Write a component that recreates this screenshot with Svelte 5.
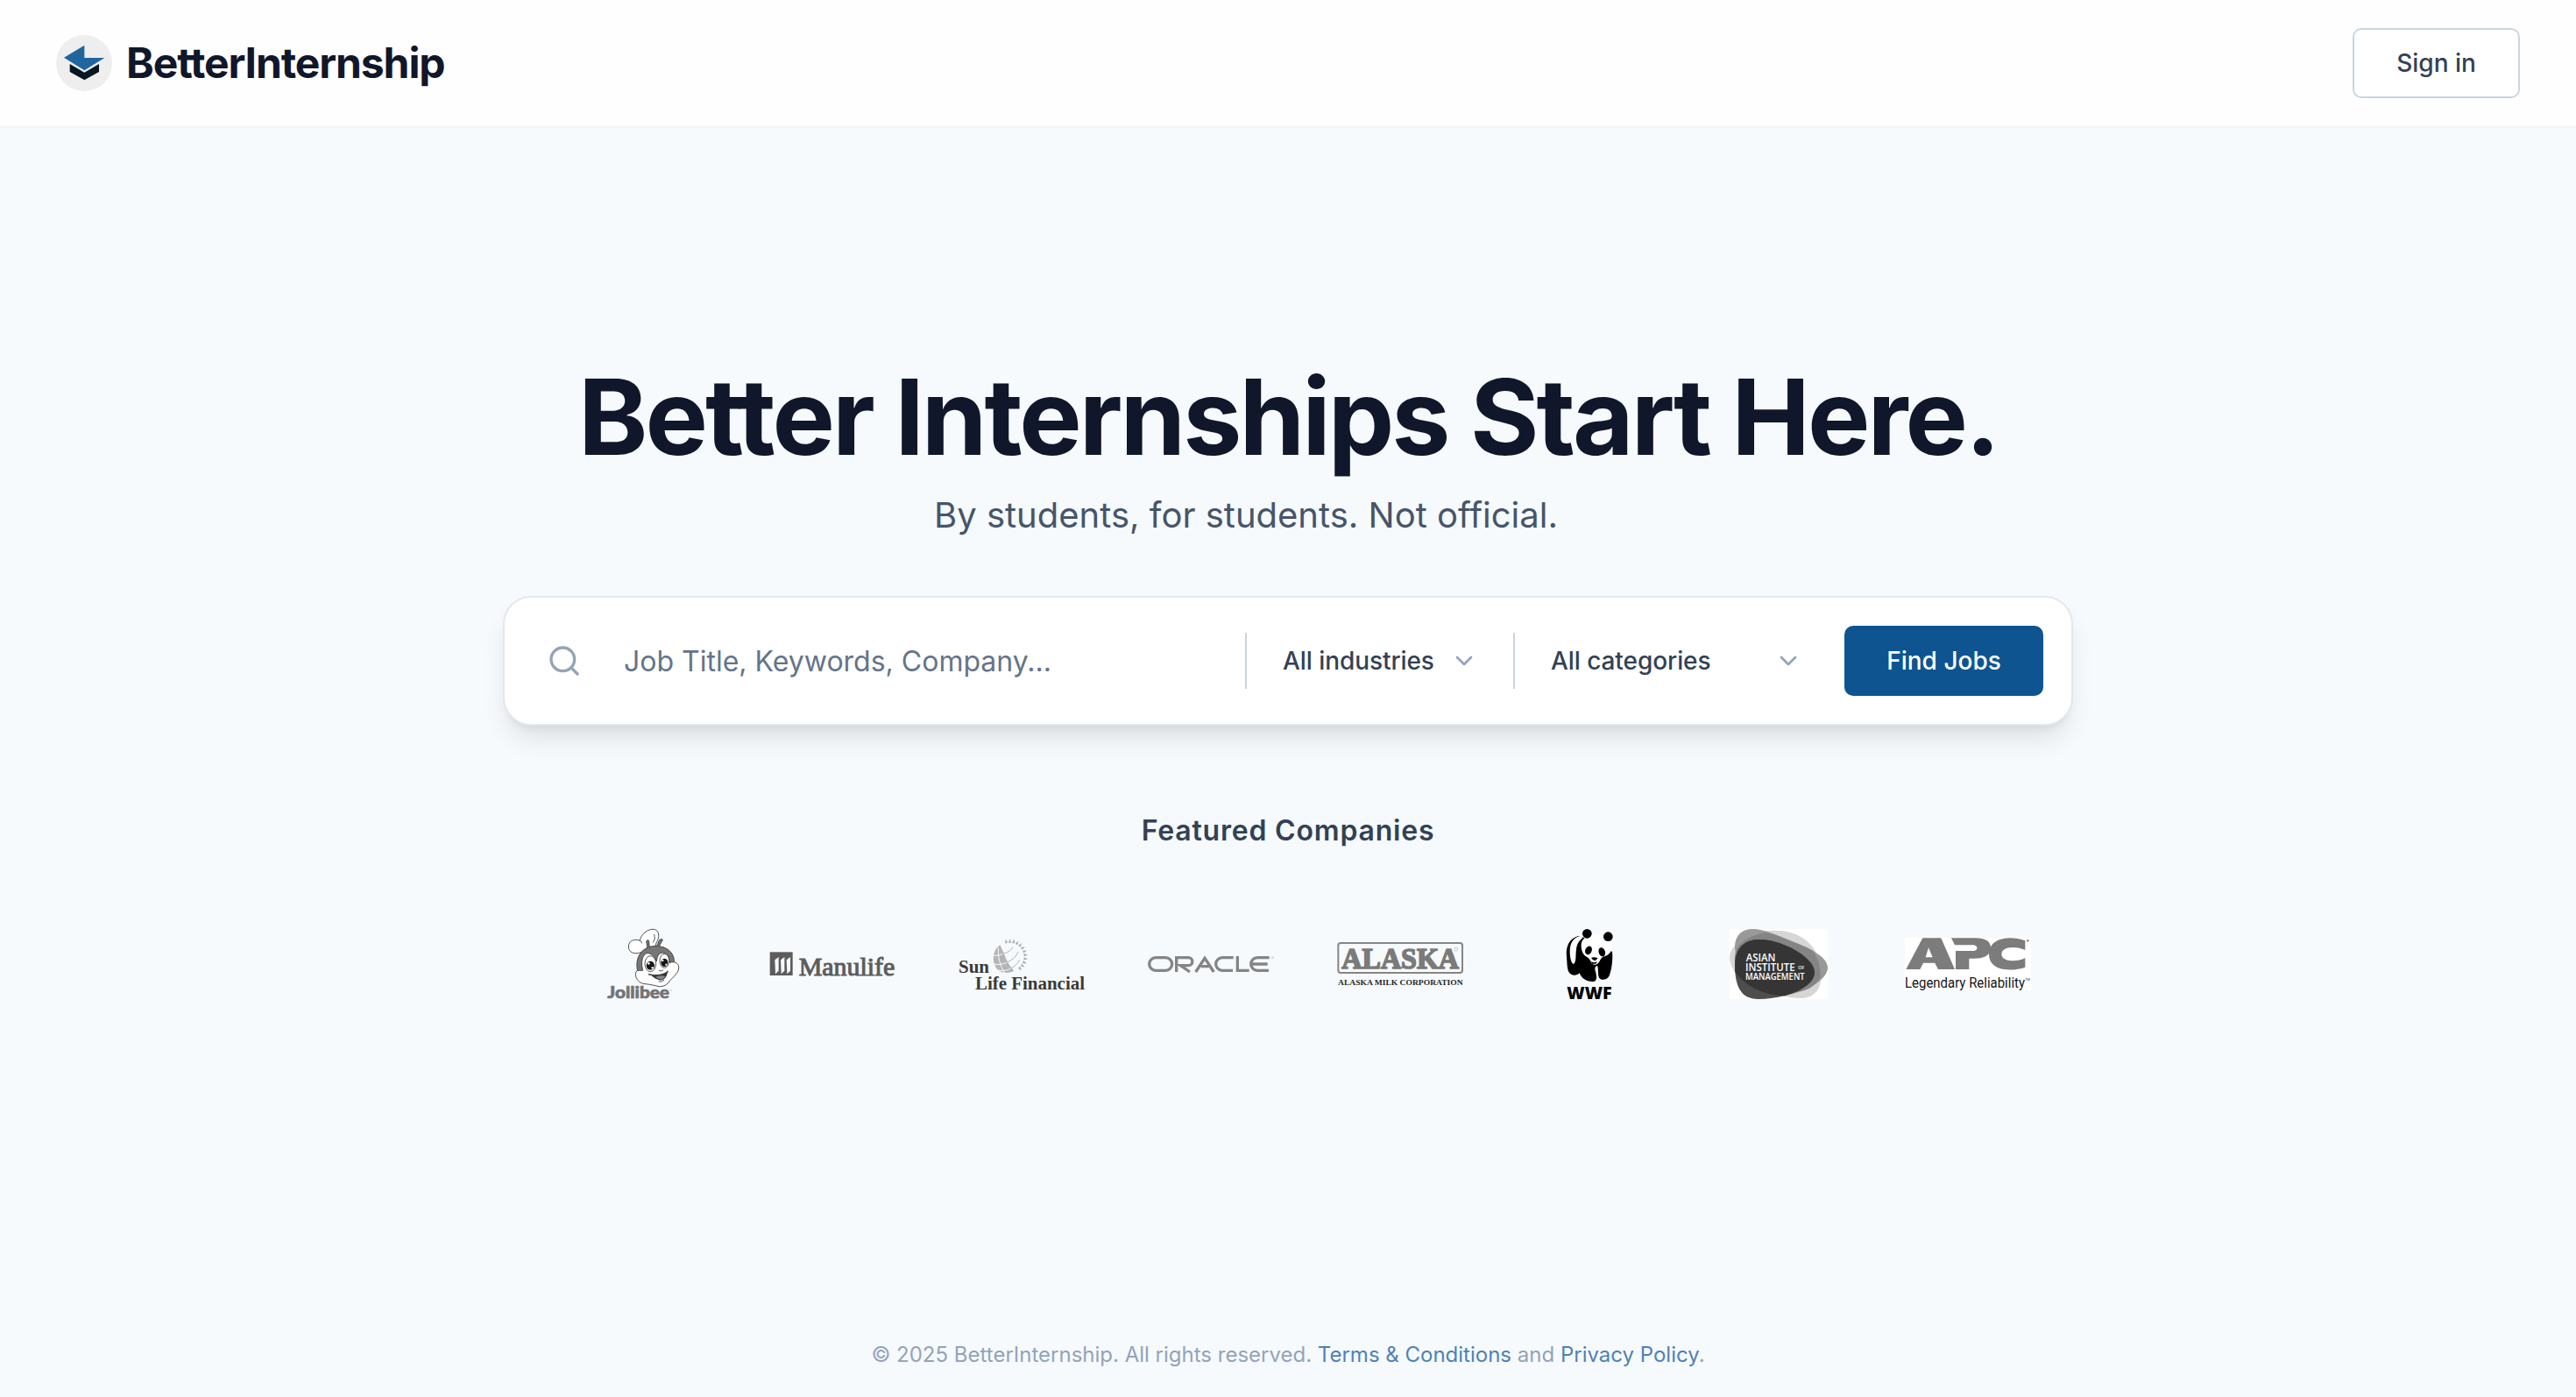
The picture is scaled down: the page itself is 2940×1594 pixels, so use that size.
<script>
  const selects = [
    { label: 'All industries', size: 'narrow' },
    { label: 'All categories', size: 'wide' }
  ];
  // Short rays fanned round the upper right of the sun globe
  const rays = [-14, 0, 14, 28, 42, 56, 70, 84, 98, 112, 126, 140];
</script>

<div class="page">
  <header>
    <a class="brand" href="#home">
      <svg class="mark" viewBox="0 0 192 192" aria-hidden="true">
        <circle cx="96" cy="96" r="96" fill="#eee" />
        <path d="M47 99v27l50 28 50-28V99l-50 29z" fill="#071722" />
        <path d="M97 35v43h69l-69 43-70-44z" fill="#21659f" />
      </svg>
      <span>BetterInternship</span>
    </a>
    <button class="signin">Sign in</button>
  </header>

  <main>
    <h1>Better Internships Start Here.</h1>
    <p class="tagline">By students, for students. Not official.</p>

    <form class="search" onsubmit={(e) => e.preventDefault()}>
      <svg class="glass" viewBox="0 0 24 24" aria-hidden="true"><circle cx="11" cy="11" r="8" /><path d="m21 21-4.3-4.3" /></svg>
      <input type="text" placeholder="Job Title, Keywords, Company..." />
      {#each selects as s}
        <div class="select {s.size}">
          <span>{s.label}</span>
          <svg viewBox="0 0 24 24" aria-hidden="true"><path d="m6 9 6 6 6-6" /></svg>
        </div>
      {/each}
      <button class="find">Find Jobs</button>
    </form>

    <h2>Featured Companies</h2>
    <div class="logos">
      <svg viewBox="-54 60 432 240" role="img" aria-label="Jollibee">
        <g stroke="#333" stroke-width="2.5" stroke-linejoin="round">
          <path d="M148 142C130 146 112 140 112 120C112 101 132 92 151 100C154 78 177 59 199 61C218 64 220 88 207 108L202 126Z" fill="#fff" />
          <path d="M151 100q6 2 7 9M200 78q6 16-4 28" fill="none" />
          <path d="M143 205C134 166 149 121 204 118C250 119 270 147 268 174L262 211L154 224Z" fill="#777" />
          <path d="M177 126L173 102Q177 94 182 101L184 125M208 121L217 99Q225 90 229 97L216 121" fill="#777" />
          <path d="M161 202C151 164 165 140 181 143Q198 146 208 171Q211 139 231 141Q251 144 253 175C272 169 286 179 284 195C281 216 257 229 248 245Q229 263 205 254Q184 249 161 247Q137 239 136 214Q138 200 149 202Z" fill="#fff" />
          <ellipse cx="187" cy="179" rx="19" ry="27" fill="#fff" />
          <ellipse cx="235" cy="169" rx="16" ry="24" fill="#fff" />
          <path d="M183 215Q220 223 245 206Q240 237 218 234Q203 230 190 218Z" fill="#333" />
          <path d="M204 224Q221 216 238 222Q231 235 216 231Z" fill="#888" stroke="none" />
          <path d="M216 202q8 4 15-2M181 212q4 5 0 7M243 203q5 1 5 5M215 240q12 2 19-5" fill="none" />
        </g>
        <ellipse cx="187" cy="185" rx="14" ry="15" fill="#161616" /><ellipse cx="235" cy="175" rx="12" ry="14" fill="#161616" />
        <circle cx="181" cy="178" r="4" fill="#fff" /><circle cx="229" cy="168" r="3.5" fill="#fff" />
        <circle cx="194" cy="193" r="4" fill="#ddd" /><circle cx="241" cy="182" r="3.5" fill="#ddd" />
        <text class="lato" x="40" y="297" font-size="57" textLength="212" lengthAdjust="spacingAndGlyphs" fill="#747474" stroke="#747474" stroke-width="2" stroke-linejoin="round">Jollibee</text>
        <circle cx="258" cy="270" r="2" fill="none" stroke="#999" />
      </svg>

      <svg viewBox="594 60 432 240" role="img" aria-label="Manulife">
        <path d="M596 139h78v80h-78z" fill="#5c5c5c" />
        <path d="M613 166l13-10v47l-11 11zM633 166l13-10v47l-11 11zM653 166l13-10v47l-11 11z" fill="#f6fafd" />
        <text class="serif" x="695" y="218" font-size="86" textLength="329" lengthAdjust="spacingAndGlyphs" fill="#5c5c5c" stroke="#5c5c5c" stroke-width="3">Manulife</text>
      </svg>

      <svg viewBox="102 60 432 240" role="img" aria-label="Sun Life Financial">
        <path d="M244 115C260 146 268 180 292 203C271 214 242 212 230 192C216 168 218 132 244 115Z" fill="#b5b5b5" />
        <g fill="none" stroke="#f6fafd" stroke-width="3"><path d="M222 151Q241 153 254 145M223 180Q245 186 271 173M237 201Q263 207 286 192M238 124Q235 172 260 211" /></g>
        <g fill="none" stroke="#b5b5b5" stroke-width="3"><path d="M253 145Q280 139 288 122M266 175Q297 163 306 138M280 195Q302 185 311 165" /></g>
        <g fill="#a8a8a8">
          {#each rays as angle}
            <path d="M278 93l4 14h-9z" transform="rotate({angle} 278 155)" />
          {/each}
        </g>
        <g class="serif bold" fill="#3a3a3a">
          <text x="102" y="210" font-size="60" textLength="105" lengthAdjust="spacingAndGlyphs">Sun</text>
          <text x="159" y="266" font-size="60" textLength="375" lengthAdjust="spacingAndGlyphs">Life Financial</text>
        </g>
      </svg>

      <svg viewBox="750 60 432 240" role="img" aria-label="Oracle">
        <g fill="none" stroke="#858585" stroke-width="10">
          <path d="M777 158h34a22 22 0 0 1 0 44h-34a22 22 0 0 1 0-44z" />
          <path d="M848 207v-49h41a13 13 0 0 1 0 27h-27l32 22" />
          <path d="M914 207l31-47 31 47M932 188h27" />
          <path d="M1043 158h-38a22 22 0 0 0 0 44h36M1057 153v49h40" />
          <path d="M1166 158h-41a22 22 0 0 0 0 44h39M1107 180h53" />
        </g>
        <circle cx="1177" cy="158" r="3.5" fill="none" stroke="#aaa" stroke-width="1.5" />
      </svg>

      <svg viewBox="78 60 432 240" role="img" aria-label="Alaska Milk Corporation">
        <rect x="82" y="108" width="425" height="102" rx="8" fill="none" stroke="#858585" stroke-width="6" />
        <text class="serif bold" x="94" y="195" font-size="103" textLength="401" lengthAdjust="spacingAndGlyphs" fill="#7a7a7a" stroke="#7a7a7a" stroke-width="5">ALASKA</text>
        <circle cx="485" cy="129" r="6" fill="#f6fafd" stroke="#999" stroke-width="1.5" />
        <text class="serif bold" x="81" y="251" font-size="27" textLength="428" lengthAdjust="spacingAndGlyphs" fill="#262626">ALASKA MILK CORPORATION</text>
      </svg>

      <svg viewBox="726 60 432 240" role="img" aria-label="WWF">
        <path d="M904 84C875 91 860 118 864 155C866 176 865 191 870 205C877 220 897 223 908 211C915 230 935 242 957 240C969 237 967 223 963 205C959 196 962 186 969 186C974 195 969 215 976 228C984 237 1000 235 1009 222C1018 201 1023 165 1020 138L975 105Z" />
        <path d="M912 84C887 88 874 109 875 140C876 164 881 177 888 180C898 172 894 150 897 130C899 112 908 98 919 91Z" fill="#fff" />
        <path d="M914 119C912 98 930 80 959 79C992 77 1017 94 1020 119C1020 137 1009 149 989 155C979 160 980 169 971 178Q961 187 950 178C946 170 943 161 934 156C923 150 915 139 914 119Z" fill="#fff" />
        <circle cx="934" cy="76" r="16" /><circle cx="1006" cy="86" r="16" />
        <ellipse cx="939" cy="133" rx="11" ry="15" transform="rotate(25 939 133)" />
        <ellipse cx="985" cy="139" rx="11" ry="16" transform="rotate(-18 985 139)" />
        <path d="M948 158q12-3 23 2l-9 9q-10-2-14-11zM948 172q11 5 21 0l-5 7h-13z" />
        <text class="sans" x="865" y="299" font-size="58" font-weight="800" textLength="154" lengthAdjust="spacingAndGlyphs">WWF</text>
      </svg>

      <svg viewBox="54 60 432 240" role="img" aria-label="Asian Institute of Management">
        <path d="M102 60h336v240H102z" fill="#fff" />
        <path d="M102 155C110 95 190 64 260 65C350 66 405 120 414 190C424 255 400 297 345 297C270 294 180 270 125 215Q102 186 102 155Z" fill="#d6d6d6" />
        <path d="M120 125C119 82 143 60 182 60C225 60 277 87 330 108C390 131 438 160 438 193C437 230 378 268 315 283C255 299 172 250 135 215Z" fill="#999" />
        <path d="M122 140C132 105 175 82 222 73C260 78 300 96 330 108Q362 120 387 134Q414 170 413 226Q400 248 374 264C308 294 190 273 127 211Q115 175 122 140Z" fill="#848484" />
        <path d="M120 190C118 125 150 98 200 96C265 96 332 128 366 161C398 190 401 218 377 244C352 272 280 299 202 300C139 301 122 254 120 190Z" fill="#4d4d4d" />
        <path d="M121 207C116 127 151 98 200 96C265 96 332 128 366 161C398 190 401 218 377 244Q346 274 292 289C215 286 159 257 121 207Z" fill="#353535" />
        <g class="sans semibold" fill="#fff">
          <text x="158" y="170" font-size="35" textLength="101" lengthAdjust="spacingAndGlyphs">ASIAN</text>
          <text x="156" y="203" font-size="35" textLength="170" lengthAdjust="spacingAndGlyphs">INSTITUTE</text>
          <text x="337" y="198" font-size="17" textLength="21" lengthAdjust="spacingAndGlyphs">OF</text>
          <text x="156" y="235" font-size="34" textLength="203" lengthAdjust="spacingAndGlyphs">MANAGEMENT</text>
        </g>
      </svg>

      <svg viewBox="702 60 432 240" role="img" aria-label="APC Legendary Reliability">
        <path d="M702 90h432v180H702z" fill="#fff" />
        <g fill="#7c7c7c">
          <path d="M706 198L763 91H826L873 198H816L805 176H765L754 198ZM773 157H797L783 124Z" fill-rule="evenodd" />
          <path d="M861 91H943C979 91 998 103 996 128C994 152 969 162 932 161H922V198H876V135H936C953 135 954 116 937 115H873Z" />
          <path d="M1114 100V132C1085 118 1034 118 1033 146C1034 174 1086 174 1114 159V191C1067 207 990 205 990 146C990 87 1066 82 1114 100Z" />
        </g>
        <circle cx="1123" cy="100" r="4" fill="#8a8a8a" />
        <text class="narrow-sans" x="702" y="260" font-size="49" textLength="411" lengthAdjust="spacingAndGlyphs" fill="#151515">Legendary Reliability</text>
        <text class="narrow-sans" x="1114" y="236" font-size="13" textLength="17" lengthAdjust="spacingAndGlyphs" fill="#333">TM</text>
      </svg>
    </div>
  </main>

  <footer>© 2025 BetterInternship. All rights reserved. <a href="#terms">Terms &amp; Conditions</a> and <a href="#privacy">Privacy Policy</a>.</footer>
</div>

<style>
  :global(body) { margin: 0; }
  .page {
    box-sizing: border-box;
    display: flex;
    flex-direction: column;
    width: 100%;
    height: 1594px;
    background: #f6fafd;
    color: #334155;
    font-family: Inter, "Liberation Sans", sans-serif;
    font-size: 28px;
    overflow: hidden;
  }
  header {
    box-sizing: border-box;
    display: flex;
    flex: none;
    align-items: center;
    justify-content: space-between;
    height: 146px;
    padding: 0 64px;
    background: #fefefe;
    border-bottom: 2px solid #f1f5f9;
  }
  .brand {
    display: flex;
    align-items: center;
    gap: 16px;
    color: #11172a;
    font-size: 48px;
    font-weight: 700;
    letter-spacing: -0.023em;
    line-height: 64px;
    text-decoration: none;
  }
  .mark { width: 64px; height: 64px; }
  button {
    box-sizing: border-box;
    height: 80px;
    padding: 0 48px;
    border-radius: 10px;
    font: 500 28px/40px Inter, "Liberation Sans", sans-serif;
    letter-spacing: 0;
  }
  .signin { width: 191px; background: #fff; border: 2px solid #cbd5e1; color: #334155; }
  main {
    display: flex;
    flex: 1;
    flex-direction: column;
    align-items: center;
    padding-top: 270px;
  }
  h1 {
    margin: 0;
    color: #11172a;
    font-size: 120px;
    font-weight: 700;
    letter-spacing: -0.025em;
    line-height: 120px;
    white-space: nowrap;
  }
  .tagline {
    margin: 24px 0 64px;
    padding-right: 96px;
    color: #475569;
    font-size: 40px;
    line-height: 56px;
  }
  .search {
    box-sizing: border-box;
    display: flex;
    align-items: center;
    width: 1792px;
    height: 148px;
    padding: 0 32px;
    background: #fff;
    border: 2px solid #e2e8f0;
    border-radius: 32px;
    box-shadow: 0 20px 30px -6px rgb(0 0 0 / 0.1), 0 8px 12px -8px rgb(0 0 0 / 0.1);
  }
  .glass { flex: none; width: 40px; height: 40px; margin: 0 48px 0 16px; }
  .glass, .select svg {
    fill: none;
    stroke: #94a3b8;
    stroke-width: 2;
    stroke-linecap: round;
    stroke-linejoin: round;
  }
  input {
    flex: 1;
    min-width: 0;
    padding: 1px 0 0;
    border: 0;
    outline: 0;
    background: transparent;
    font: 400 32px/48px Inter, "Liberation Sans", sans-serif;
  }
  input::placeholder { color: #64748b; opacity: 1; }
  .select {
    box-sizing: border-box;
    display: flex;
    flex: none;
    align-items: center;
    justify-content: space-between;
    height: 64px;
    padding-left: 41px;
    border-left: 2px solid #cbd5e1;
    font-weight: 500;
    letter-spacing: -0.07px;
  }
  .select svg { width: 32px; height: 32px; }
  .select.narrow { width: 306px; padding-right: 40px; }
  .select.wide { width: 378px; padding-right: 48px; }
  .find { flex: none; width: 227px; background: #0d5491; border: 0; color: #fff; }
  h2 {
    margin: 96px 0 88px;
    font-size: 32px;
    font-weight: 600;
    letter-spacing: 0.025em;
    line-height: 48px;
  }
  .logos { display: flex; gap: 72px; width: 1656px; margin-left: 40px; }
  .logos svg { flex: none; width: 144px; height: 80px; overflow: visible; }
  .serif { font-family: "Liberation Serif", serif; }
  .sans { font-family: "Open Sans", sans-serif; }
  .narrow-sans { font-family: Roboto, sans-serif; }
  .lato { font-family: Lato, sans-serif; font-weight: 900; }
  .bold { font-weight: 700; }
  .semibold { font-weight: 600; }
  footer {
    flex: none;
    padding-bottom: 32px;
    color: #94a3b8;
    font-size: 24px;
    line-height: 32px;
    text-align: center;
  }
  footer a { color: #4f81b7; text-decoration: none; }
</style>
